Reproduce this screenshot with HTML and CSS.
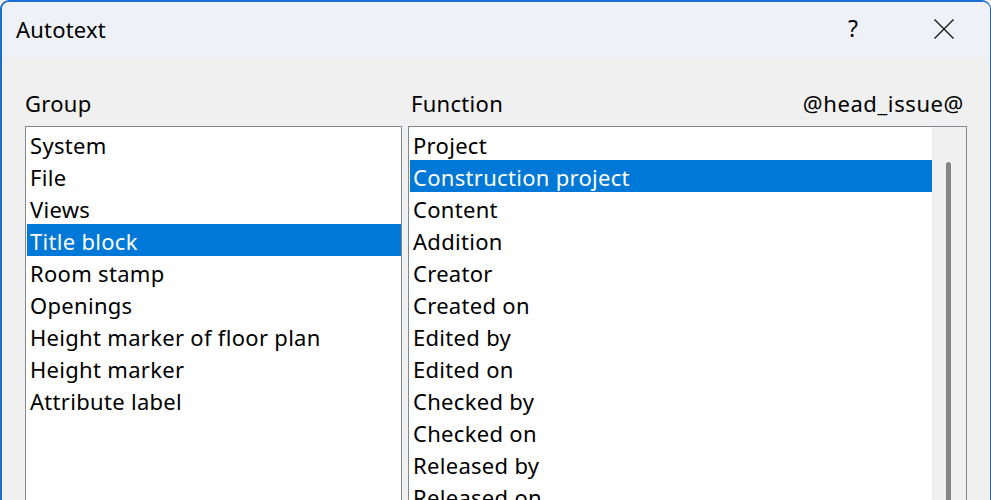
FILE: index.html
```html
<!DOCTYPE html>
<html lang="en">
<head>
<meta charset="utf-8">
<title>Autotext</title>
<link rel="stylesheet" href="styles.css">
</head>
<body>
<div class="window">
  <div class="titlebar">
    <div class="title">Autotext</div>
    <div class="caption-buttons">
      <span class="help">?</span>
      <svg class="close" width="20" height="20" viewBox="0 0 20 20"><path d="M0.5 0.5 L19.5 19.5 M19.5 0.5 L0.5 19.5" stroke="#1a1a1a" stroke-width="1.4" fill="none"/></svg>
    </div>
  </div>
  <div class="content">
    <div class="col group-col">
      <div class="label">Group</div>
      <div class="listbox">
        <div class="items">
          <div class="item">System</div>
          <div class="item">File</div>
          <div class="item">Views</div>
          <div class="item selected">Title block</div>
          <div class="item">Room stamp</div>
          <div class="item">Openings</div>
          <div class="item">Height marker of floor plan</div>
          <div class="item">Height marker</div>
          <div class="item">Attribute label</div>
        </div>
      </div>
    </div>
    <div class="col func-col">
      <div class="label-row">
        <div class="label func-label">Function</div>
        <div class="label issue">@head_issue@</div>
      </div>
      <div class="listbox">
        <div class="items">
          <div class="item">Project</div>
          <div class="item selected">Construction project</div>
          <div class="item">Content</div>
          <div class="item">Addition</div>
          <div class="item">Creator</div>
          <div class="item">Created on</div>
          <div class="item">Edited by</div>
          <div class="item">Edited on</div>
          <div class="item">Checked by</div>
          <div class="item">Checked on</div>
          <div class="item">Released by</div>
          <div class="item">Released on</div>
        </div>
        <div class="scrollbar"><div class="thumb"></div></div>
      </div>
    </div>
  </div>
</div>
</body>
</html>
```
FILE: styles.css
```css
html, body {
  margin: 0;
  padding: 0;
  background: #f0f0f0;
}
body {
  width: 991px;
  height: 500px;
  overflow: hidden;
  font-family: "Noto Sans", "Open Sans", sans-serif;
  color: #000;
}
.window {
  box-sizing: border-box;
  width: 991px;
  height: 520px;
  border-top: 2px solid #1b6fd0;
  border-left: 2px solid #1b6fd0;
  border-right: 1px solid #1b6fd0;
  border-radius: 9px 9px 0 0;
  background: #f0f0f0;
  overflow: hidden;
}
.titlebar {
  height: 56px;
  background: #eef2f8;
  display: flex;
  align-items: center;
  justify-content: space-between;
  padding-left: 14px;
}
.title {
  font-size: 22px;
  line-height: 30px;
  letter-spacing: 0.2px;
  color: #000;
  margin-top: -2px;
}
.caption-buttons {
  display: flex;
  align-items: center;
  margin-top: -2px;
}
.help {
  font-size: 23px;
  line-height: 30px;
  margin-right: 76px;
  margin-top: -2px;
}
.close {
  display: block;
  margin-right: 36px;
}
.content {
  display: flex;
  padding: 30px 0 0 23px;
  gap: 6px;
}
.col {
  display: flex;
  flex-direction: column;
}
.group-col {
  width: 377px;
}
.func-col {
  width: 559px;
}
.label {
  font-size: 22px;
  letter-spacing: 0.3px;
  line-height: 31px;
  height: 38px;
}
.label-row {
  display: flex;
  justify-content: space-between;
}
.func-label {
  padding-left: 3px;
}
.issue {
  padding-right: 3px;
  letter-spacing: 0.6px;
}
.listbox {
  box-sizing: border-box;
  height: 420px;
  border: 1px solid #828790;
  background: #fff;
  display: flex;
  padding: 1px 0 0 1px;
}
.items {
  flex: 1;
  min-width: 0;
}
.item {
  font-size: 22px;
  letter-spacing: 0.3px;
  line-height: 35px;
  height: 32px;
  padding-left: 3px;
  white-space: nowrap;
  overflow: visible;
}
.item.selected {
  background: #0078d7;
  color: #fff;
}
.scrollbar {
  width: 34px;
  background: #f0f0f0;
  margin-top: -1px;
}
.thumb {
  width: 5px;
  height: 400px;
  margin: 35px 0 0 14px;
  background: #858585;
  border-radius: 3px;
}
```
